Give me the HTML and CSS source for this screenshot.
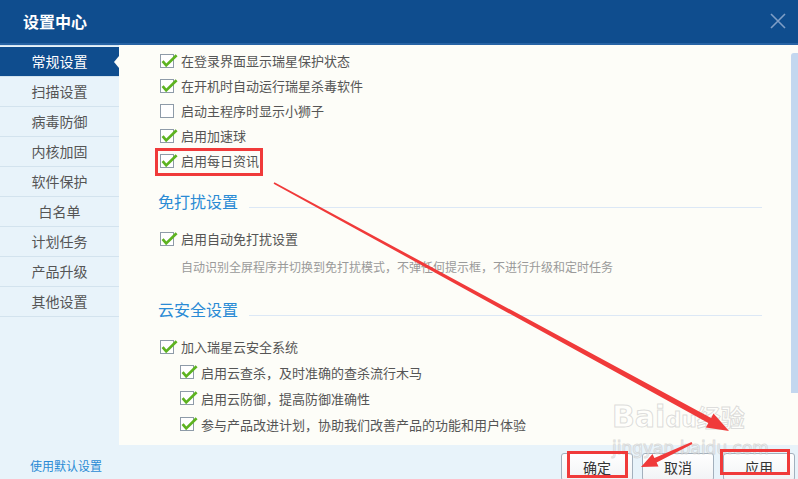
FILE: index.html
```html
<!DOCTYPE html>
<html lang="zh-CN">
<head>
  <meta charset="UTF-8" />
  <title>设置中心</title>
  <link rel="stylesheet" href="styles.css">
</head>
<body>

  <svg class="defs" width="0" height="0">
    <symbol id="box" viewBox="0 0 18 14">
      <rect x="0.5" y="0.5" width="13" height="13" fill="#fff" stroke="#8e9ba8"/>
    </symbol>
    <symbol id="chk" viewBox="0 0 18 14">
      <rect x="0.5" y="0.5" width="13" height="13" fill="#fff" stroke="#8e9ba8"/>
      <path d="M2.6 7.2 L6.2 11.4 L16.6 1.2" fill="none" stroke="#5db320" stroke-width="2.7"/>
    </symbol>
  </svg>

  <div class="window">
    <div class="titlebar">
      <span class="title">设置中心</span>
      <svg class="close" width="16" height="16" viewBox="0 0 16 16">
        <path d="M1 1 L15 15 M15 1 L1 15" stroke="#7f9ec6" stroke-width="1.6"/>
      </svg>
    </div>

    <div class="main">
      <ul class="nav">
        <li class="active">常规设置</li>
        <li>扫描设置</li>
        <li>病毒防御</li>
        <li>内核加固</li>
        <li>软件保护</li>
        <li>白名单</li>
        <li>计划任务</li>
        <li>产品升级</li>
        <li>其他设置</li>
      </ul>

      <div class="pane">
        <div class="settings">
          <label class="row"><svg class="cb"><use href="#chk"/></svg>在登录界面显示瑞星保护状态</label>
          <label class="row"><svg class="cb"><use href="#chk"/></svg>在开机时自动运行瑞星杀毒软件</label>
          <label class="row"><svg class="cb"><use href="#box"/></svg>启动主程序时显示小狮子</label>
          <label class="row"><svg class="cb"><use href="#chk"/></svg>启用加速球</label>
          <label class="row"><svg class="cb"><use href="#chk"/></svg>启用每日资讯</label>

          <div class="section">
            <span>免打扰设置</span>
            <div class="rule"></div>
          </div>
          <label class="row"><svg class="cb"><use href="#chk"/></svg>启用自动免打扰设置</label>
          <p class="desc">自动识别全屏程序并切换到免打扰模式，不弹任何提示框，不进行升级和定时任务</p>

          <div class="section cloud">
            <span>云安全设置</span>
            <div class="rule"></div>
          </div>
          <label class="row"><svg class="cb"><use href="#chk"/></svg>加入瑞星云安全系统</label>
          <label class="row sub"><svg class="cb"><use href="#chk"/></svg>启用云查杀，及时准确的查杀流行木马</label>
          <label class="row sub"><svg class="cb"><use href="#chk"/></svg>启用云防御，提高防御准确性</label>
          <label class="row sub"><svg class="cb"><use href="#chk"/></svg>参与产品改进计划，协助我们改善产品的功能和用户体验</label>
        </div>
        <div class="scroll"></div>
      </div>
    </div>

    <div class="footer">
      <a class="reset" href="#">使用默认设置</a>
      <div class="buttons">
        <button>确定</button>
        <button>取消</button>
        <button>应用</button>
      </div>
    </div>

    <!-- annotations drawn over the screenshot -->
    <div class="watermark">
      <div class="wm-logo">Bai<span class="du">du</span><span class="jy">经验</span></div>
      <div class="wm-url">jingyan.baidu.com</div>
    </div>
    <svg class="marks" width="798" height="479" viewBox="0 0 798 479">
      <g fill="none" stroke="#f03a3a" stroke-width="3">
        <rect x="156.5" y="149.5" width="105" height="25"/>
        <rect x="568.5" y="452.5" width="58" height="24"/>
        <rect x="721.5" y="450.5" width="67" height="23"/>
      </g>
      <g fill="#f03a3a">
        <polygon points="274.4,182.3 711.1,417.9 713.5,413.5 729,431 705.9,427.5 708.3,423.1 273.6,183.7"/>
        <polygon points="691.6,442.1 654.4,457.9 652.5,453.9 641,467 658.5,466.5 656.6,462.5 692.4,443.9"/>
      </g>
    </svg>
  </div>

</body>
</html>
```

FILE: styles.css
```css
* {
  box-sizing: border-box;
}
body {
  margin: 0;
  font-family: "Noto Sans CJK SC", "Noto Sans", sans-serif;
  background: #e8f3fa;
}

.defs {
  position: absolute;
}

.window {
  position: relative;
  width: 798px;
  height: 479px;
  overflow: hidden;
  background: #e8f3fa;
}

/* title bar */
.titlebar {
  height: 45px;
  background: #0f4d8e;
  border-bottom: 2px solid #2763a4;
  display: flex;
  align-items: center;
  justify-content: space-between;
  padding: 0 12px 2px 23px;
}
.title {
  color: #fff;
  font-size: 16px;
  font-weight: bold;
}
.close {
  margin-top: 1px;
}

.main {
  display: flex;
  height: 400px;
}

/* left menu */
.nav {
  list-style: none;
  margin: 0;
  padding: 1px 0 0;
  width: 119px;
  border-top: 1px solid #d6e6f2;
}
.nav li {
  position: relative;
  height: 30px;
  line-height: 28px;
  border-bottom: 1px solid #d3e3ee;
  text-align: center;
  font-size: 14px;
  color: #555;
}
.nav li.active {
  background: #0f4d8e;
  color: #fff;
}
.nav li.active::after {
  content: "";
  position: absolute;
  right: 0;
  top: 9px;
  border-style: solid;
  border-width: 6px 5px 6px 0;
  border-color: transparent #fdfdf8 transparent transparent;
}

/* settings pane */
.pane {
  flex: 1;
  display: flex;
  background: #fdfdf8;
}
.settings {
  flex: 1;
  padding: 3px 29px 0 41px;
}
.scroll {
  width: 7px;
  height: 340px;
  margin-top: 8px;
  background: #c3d7ef;
  border-radius: 3px 0 0 0;
}

.row {
  display: flex;
  align-items: center;
  height: 25px;
  font-size: 13px;
  color: #555;
}
.row.sub {
  height: 26px;
  padding-left: 20px;
}
.cb {
  width: 18px;
  height: 14px;
  margin-right: 3px;
  flex: none;
}

.section {
  display: flex;
  align-items: center;
  height: 26px;
  margin: 15px 0 12px -2px;
  font-size: 16px;
  color: #2a8bd5;
}
.section.cloud {
  margin-top: 19px;
}
.rule {
  flex: 1;
  height: 1px;
  margin: 12px 0 0 11px;
  background: #dce8f6;
}

.desc {
  margin: 0;
  padding: 6px 0 0 21px;
  line-height: 20px;
  font-size: 12px;
  color: #9a9a9a;
}

/* bottom bar */
.footer {
  display: flex;
  justify-content: space-between;
  height: 34px;
  padding: 8px 3px 0 30px;
}
.reset {
  font-size: 12px;
  line-height: 26px;
  color: #2a8bd5;
  text-decoration: none;
}
.buttons {
  display: flex;
  gap: 9px;
}
.buttons button {
  width: 72px;
  height: 28px;
  border: 1px solid #a3b0bd;
  border-radius: 3px;
  background: linear-gradient(#ffffff, #f1f3f5);
  font-family: inherit;
  font-size: 14px;
  color: #333;
}

/* baidu watermark + red marks */
.watermark {
  position: absolute;
  left: 612px;
  top: 396px;
  color: rgba(255, 255, 255, 0.55);
  -webkit-text-stroke: 1px rgba(170, 170, 170, 0.4);
  font-family: "DejaVu Sans", sans-serif;
  pointer-events: none;
}
.wm-logo {
  font-size: 30px;
  font-weight: bold;
  line-height: 42px;
}
.wm-logo .du {
  font-size: 22px;
}
.wm-logo .jy {
  font-family: "Noto Sans CJK SC", sans-serif;
  font-size: 24px;
}
.wm-url {
  font-size: 17px;
  line-height: 18px;
  margin-top: -2px;
}
.marks {
  position: absolute;
  left: 0;
  top: 0;
  pointer-events: none;
}
```
